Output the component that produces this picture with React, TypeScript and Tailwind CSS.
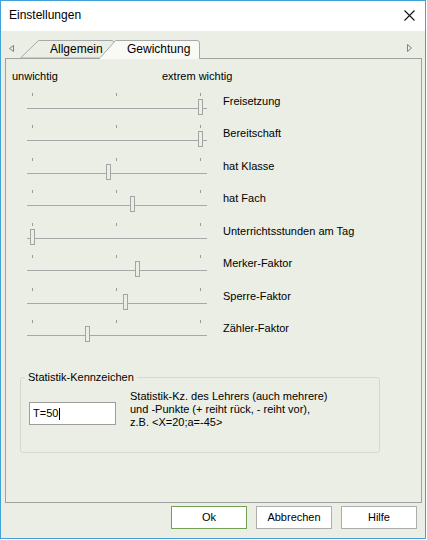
import React from 'react';

const rows = [
  { label: 'Freisetzung', pos: 171 },
  { label: 'Bereitschaft', pos: 171 },
  { label: 'hat Klasse', pos: 79 },
  { label: 'hat Fach', pos: 103 },
  { label: 'Unterrichtsstunden am Tag', pos: 3 },
  { label: 'Merker-Faktor', pos: 108 },
  { label: 'Sperre-Faktor', pos: 96 },
  { label: 'Zähler-Faktor', pos: 58 },
];

function SliderRow({ label, pos, tall }: { label: string; pos: number; tall: boolean }) {
  return (
    <div className={`flex ${tall ? 'h-[33px]' : 'h-[32px]'}`}>
      {/* Schieberegler */}
      <div className="relative ml-[15px] w-[180px]">
        <div className="mt-[5px] flex w-[174px] justify-between pl-[5px]">
          <div className="h-[3px] w-px bg-[#9a9a9a]" />
          <div className="h-[3px] w-px bg-[#9a9a9a]" />
          <div className="h-[3px] w-px bg-[#9a9a9a]" />
        </div>
        <div className="mt-[12px] h-px w-full bg-[#a8a8a8]" />
        <div
          className="absolute top-[11px] h-[16px] w-[5px] border border-[#a4a4a4] bg-[#eaeee4]"
          style={{ left: pos }}
        />
      </div>
      <div className="ml-[16px] pt-[7px] leading-[13px]">{label}</div>
    </div>
  );
}

export default function App() {
  return (
    <div className="h-[540px] w-[427px] bg-white" style={{ fontFamily: '"Liberation Sans", Arial, sans-serif' }}>
      <div className="flex h-[539px] w-[426px] flex-col border border-[#43a1da] bg-[#eaeee4] text-[11px] text-black">
        {/* Titelleiste */}
        <div className="flex h-[30px] items-start justify-between bg-white pl-[8px] pr-[10px]">
          <span className="mt-[6px] text-[12px] leading-[16px]">Einstellungen</span>
          <svg className="mt-[9px]" width="11" height="11" viewBox="0 0 11 11">
            <path d="M0.5 0.5 L10.5 10.5 M10.5 0.5 L0.5 10.5" stroke="#111" strokeWidth="1.1" fill="none" />
          </svg>
        </div>

        {/* Registerkarten */}
        <div className="relative z-10 h-[27px]">
          <svg className="absolute left-[-1px] top-0" width="427" height="28" viewBox="0 0 427 28">
            <path d="M20.5 27 L38.5 9.5 L112 9.5 L116 12 L116 27 Z" fill="#eaeee4" stroke="#a8a8a8" />
            <path d="M99.5 27.5 L115.5 9.5 L197 9.5 Q199.5 9.5 199.5 12 L199.5 27.5" fill="#f9faf6" stroke="#a8a8a8" />
            <rect x="100" y="26.5" width="99" height="2" fill="#f9faf6" />
            <path d="M13.5 14.5 L9.5 17.5 L13.5 20.5 Z" fill="none" stroke="#808080" />
            <path d="M407.5 13.5 L411.5 17 L407.5 20.5 Z" fill="none" stroke="#808080" />
          </svg>
          <div className="relative flex pt-[11px] text-[12px] leading-[14px]">
            <span className="ml-[49px]">Allgemein</span>
            <span className="absolute left-[126px] top-[11px]">Gewichtung</span>
          </div>
        </div>

        {/* Seite */}
        <div className="ml-[4px] flex h-[445px] w-[417px] flex-col border border-[#a0a0a0] pl-[6px] pt-[11px]">
          <div className="flex leading-[13px]">
            <span className="w-[150px]">unwichtig</span>
            <span>extrem wichtig</span>
          </div>
          <div className="mt-[5px] flex flex-col">
            {rows.map((r, i) => (
              <SliderRow key={r.label} label={r.label} pos={r.pos} tall={i % 2 === 1} />
            ))}
          </div>

          <fieldset className="ml-[8px] mt-[22px] w-[360px] rounded-[3px] border border-[#d4d8ce] pb-[23px] pl-[8px]">
            <legend className="ml-[-4px] px-[3px] leading-[14px]">Statistik-Kennzeichen</legend>
            <div className="flex items-start pt-[6px]">
              <div className="mt-[12px] flex h-[23px] w-[87px] items-center border border-[#9e9e9e] bg-white pl-[3px] text-[11px]">
                <span>T=50</span>
                <span className="ml-px h-[12px] w-px bg-black" />
              </div>
              <div className="ml-[14px] leading-[13px]">
                <div>Statistik-Kz. des Lehrers (auch mehrere)</div>
                <div>und -Punkte (+ reiht rück, - reiht vor),</div>
                <div>z.B. &lt;X=20;a=-45&gt;</div>
              </div>
            </div>
          </fieldset>
        </div>

        {/* Schaltflächen */}
        <div className="mt-[3px] flex justify-end gap-[9px] pr-[8px]">
          <button className="flex h-[23px] w-[76px] items-center justify-center border border-[#74a052] bg-white leading-[13px]">Ok</button>
          <button className="flex h-[23px] w-[76px] items-center justify-center border border-[#adadad] bg-white leading-[13px]">Abbrechen</button>
          <button className="flex h-[23px] w-[76px] items-center justify-center border border-[#adadad] bg-white leading-[13px]">Hilfe</button>
        </div>
      </div>
    </div>
  );
}
